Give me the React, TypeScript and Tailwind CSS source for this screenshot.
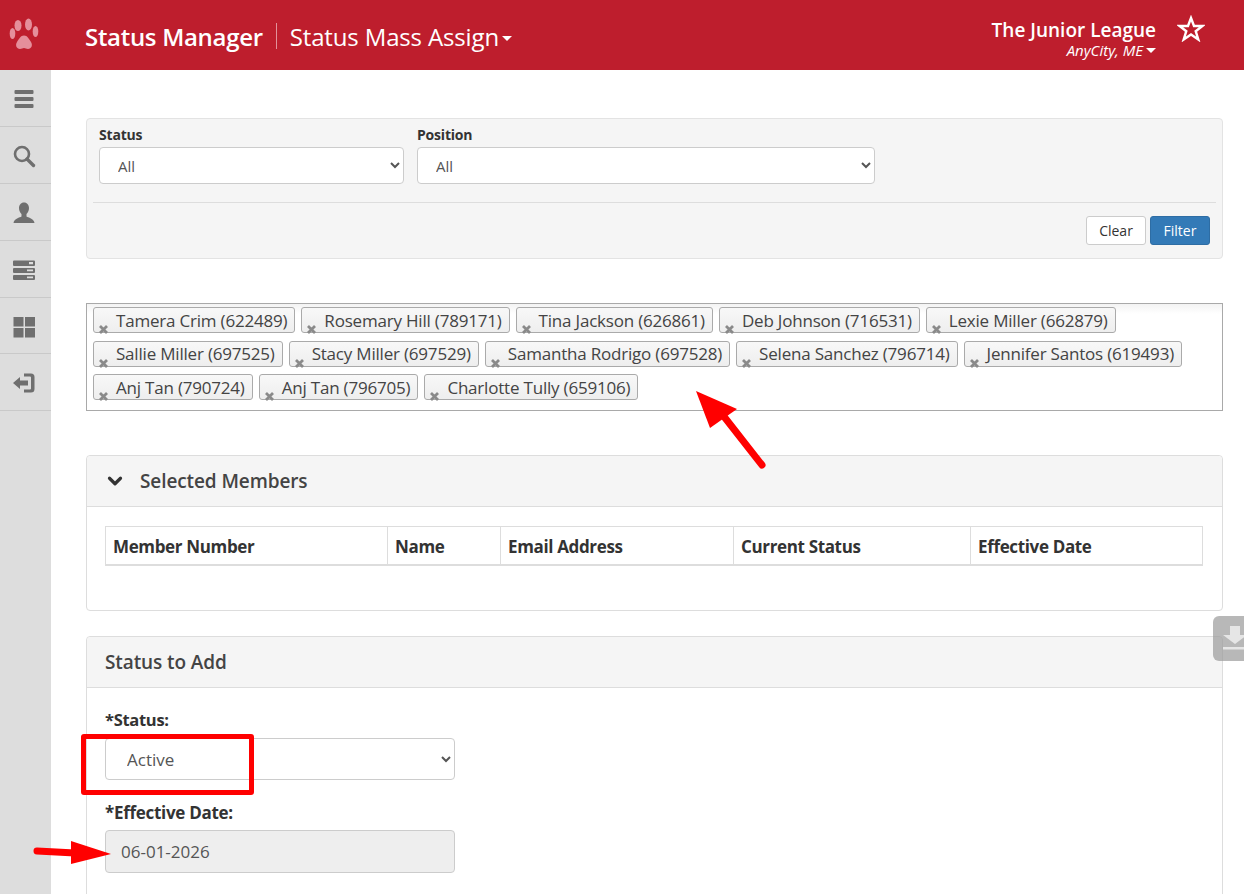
import { ChevronDown } from 'lucide-react';

const FONT = 'font-["Open_Sans","Noto_Sans",sans-serif]';

const tagRows = [
  ['Tamera Crim (622489)', 'Rosemary Hill (789171)', 'Tina Jackson (626861)', 'Deb Johnson (716531)', 'Lexie Miller (662879)'],
  ['Sallie Miller (697525)', 'Stacy Miller (697529)', 'Samantha Rodrigo (697528)', 'Selena Sanchez (796714)', 'Jennifer Santos (619493)'],
  ['Anj Tan (790724)', 'Anj Tan (796705)', 'Charlotte Tully (659106)'],
];

const columns = [
  { label: 'Member Number', width: 'w-[281px]' },
  { label: 'Name', width: 'w-[113px]' },
  { label: 'Email Address', width: 'w-[233px]' },
  { label: 'Current Status', width: 'w-[237px]' },
  { label: 'Effective Date', width: 'flex-1' },
];

const Paw = () => (
  <svg width="30" height="36" viewBox="0 0 30 36" fill="#e58f9b">
    <path d="M15 18.500c-3.500 0-5 3.500-7 6.500-2 3-.5 7 3 7 1.500 0 2.800-1 4-1s2.500 1 4 1c3.500 0 5-4 3-7-2-3-3.500-6.500-7-6.500z" />
    <ellipse cx="9" cy="8.500" rx="3.500" ry="5.500" />
    <ellipse cx="19.500" cy="7.500" rx="3.500" ry="6" />
    <ellipse cx="3.500" cy="16.500" rx="2.800" ry="5.500" />
    <ellipse cx="26.500" cy="14.500" rx="2.800" ry="5.500" />
  </svg>
);

const Caret = () => <span className="inline-block w-0 h-0 border-x-[5px] border-x-transparent border-t-[5px] border-t-white" />;

const SideIcon = ({ children }: { children: React.ReactNode }) => (
  <div className="h-[56.900px] border-b border-[#c9c9c9] flex items-center justify-center pr-[3px] pt-[2px]">
    <svg width="24" height="24" viewBox="0 0 24 24" fill="#6f6f6f">{children}</svg>
  </div>
);

const Sidebar = () => (
  <div className="w-[51px] shrink-0 bg-[#dddddd]">
    <SideIcon>
      <rect x="2.500" y="3" width="19" height="4" rx="1" />
      <rect x="2.500" y="10" width="19" height="4" rx="1" />
      <rect x="2.500" y="17" width="19" height="4" rx="1" />
    </SideIcon>
    <SideIcon>
      <circle cx="10" cy="10" r="7" fill="none" stroke="#6f6f6f" strokeWidth="2.600" />
      <path d="M15 15l6.500 6.500" stroke="#6f6f6f" strokeWidth="3.400" strokeLinecap="round" />
    </SideIcon>
    <SideIcon>
      <path d="M12 1.500c3.200 0 5 2.500 5 5.500 0 2.600-1.200 5-2.500 6v2.500c1.500 1 7.500 2 8 6.500H1.500c.5-4.500 6.500-5.500 8-6.500V13C8.200 12 7 9.600 7 7c0-3 1.800-5.500 5-5.500z" />
    </SideIcon>
    <SideIcon>
      <path fillRule="evenodd" d="M2 2.500h20a1 1 0 0 1 1 1V7a1 1 0 0 1-1 1H2a1 1 0 0 1-1-1V3.500a1 1 0 0 1 1-1zM17 4v2.200h4V4zM2 10h20a1 1 0 0 1 1 1v3a1 1 0 0 1-1 1H2a1 1 0 0 1-1-1v-3a1 1 0 0 1 1-1zm13 1.500v1.800h6v-1.800zM2 17h20a1 1 0 0 1 1 1v3a1 1 0 0 1-1 1H2a1 1 0 0 1-1-1v-3a1 1 0 0 1 1-1zm13 1.500v1.800h6v-1.800z" />
    </SideIcon>
    <SideIcon>
      <rect x="1.500" y="2" width="10" height="9.500" />
      <rect x="13" y="2" width="10" height="9.500" />
      <rect x="1.500" y="13" width="10" height="9.500" />
      <rect x="13" y="13" width="10" height="9.500" />
    </SideIcon>
    <SideIcon>
      <path d="M1 12l7-6v3.500h8v5H8V18z" />
      <path d="M12 2.500h7a3.500 3.500 0 0 1 3.500 3.500v12a3.500 3.500 0 0 1-3.500 3.500h-7v-3h6a1 1 0 0 0 1-1V6.500a1 1 0 0 0-1-1h-6z" />
    </SideIcon>
  </div>
);

const Tag = ({ label }: { label: string }) => (
  <span className="relative h-[26px] pl-[22px] pr-[7px] pt-[1px] flex items-center rounded-[3px] border border-[#aaaaaa] bg-gradient-to-b from-[#f8f8f8] to-[#eeeeee] text-[17px] tracking-[-0.2px] text-[#444444] whitespace-nowrap">
    <svg className="absolute left-[4px] bottom-[-3px]" width="11" height="11" viewBox="0 0 11 11" stroke="#8a8a8a" strokeWidth="2.800">
      <path d="M2 2l7 7M9 2l-7 7" />
    </svg>
    {label}
  </span>
);

const Panel = ({ title, chevron, children }: { title: string; chevron?: boolean; children: React.ReactNode }) => (
  <div className="border border-[#dddddd] rounded-[4px] bg-white">
    <div className="h-[51px] bg-[#f5f5f5] border-b border-[#dddddd] rounded-t-[4px] flex items-center px-[18px]">
      {chevron && <ChevronDown size={22} strokeWidth={3.500} className="text-[#333333] mr-[13px] -ml-[1px]" />}
      <span className={`text-[19px] font-semibold tracking-[-0.1px] text-[#444444] ${chevron ? 'ml-[1px]' : ''}`}>{title}</span>
    </div>
    {children}
  </div>
);

export default function App() {
  return (
    <div className={`${FONT} relative h-[894px] overflow-hidden bg-white flex flex-col`}>
      <header className="h-[70px] shrink-0 bg-[#be1e2d] flex items-center text-white">
        <div className="w-[51px] flex justify-center pr-[3px]"><Paw /></div>
        <div className="ml-[34px] mt-[3px] text-[24px] font-semibold tracking-[-0.3px]">Status Manager</div>
        <div className="w-px h-[26px] bg-[#e2929a] mx-[13px] mt-[2px]" />
        <div className="text-[24px] mt-[3px] tracking-[-0.15px]">Status Mass Assign</div>
        <span className="ml-[3px] mt-[6px] flex"><Caret /></span>
        <div className="ml-auto flex flex-col items-end mr-[88px] mt-[8px]">
          <div className="text-[19px] font-semibold leading-[22px]">The Junior League</div>
          <div className="flex items-center gap-[3px] text-[15px] italic leading-[19px]">AnyCity, ME <Caret /></div>
        </div>
        <svg className="absolute left-[1177px] top-[15px]" width="28" height="27" viewBox="0 0 28 27" fill="none" stroke="#ffffff" strokeWidth="2.400" strokeLinejoin="miter">
          <path d="M14 3l3 8h8.500l-6.800 5.200 2.600 8.300L14 19.500l-7.300 5 2.600-8.300L2.500 11H11z" />
        </svg>
      </header>

      <div className="flex flex-1 min-h-0">
        <Sidebar />
        <main className="flex-1 pl-[35px] pr-[21px] pt-[48px]">
          <div className="h-[141px] border border-[#e3e3e3] rounded-[4px] bg-[#f5f5f5] px-[6px] pt-[6px]">
            <div className="flex gap-[13px] px-[6px]">
              <div>
                <label className="block text-[14px] font-bold text-[#333333] leading-[19px] tracking-[-0.2px]">Status</label>
                <select className="block mt-[3px] w-[305px] h-[37px] rounded-[4px] border border-[#cccccc] bg-white pl-[14px] text-[15px] text-[#555555]">
                  <option>All</option>
                </select>
              </div>
              <div>
                <label className="block text-[14px] font-bold text-[#333333] leading-[19px] tracking-[-0.2px]">Position</label>
                <select className="block mt-[3px] w-[458px] h-[37px] rounded-[4px] border border-[#cccccc] bg-white pl-[14px] text-[15px] text-[#555555]">
                  <option>All</option>
                </select>
              </div>
            </div>
            <div className="mt-[18px] border-t border-[#dddddd]" />
            <div className="mt-[13px] flex justify-end gap-[4px] pr-[6px]">
              <button className="w-[60px] h-[29px] rounded-[3px] border border-[#cccccc] bg-white text-[14px] text-[#333333]">Clear</button>
              <button className="w-[60px] h-[29px] rounded-[3px] border border-[#2e6da4] bg-[#337ab7] text-[14px] text-white">Filter</button>
            </div>
          </div>

          <div className="mt-[44px] h-[108px] border border-[#a9a9a9] pl-[6px] pt-[3px] flex flex-col gap-[7.500px] bg-gradient-to-b from-[#f3f3f3] via-white to-white bg-[length:100%_20px] bg-no-repeat">
            {tagRows.map((row, i) => (
              <div key={i} className="flex gap-[6px]">
                {row.map((t) => <Tag key={t} label={t} />)}
              </div>
            ))}
          </div>

          <div className="mt-[44px]">
            <Panel title="Selected Members" chevron>
              <div className="pl-[18px] pr-[19px] pt-[19px] h-[103px]">
                <div className="h-[40px] flex border border-[#dddddd] border-b-2">
                  {columns.map((c, i) => (
                    <div key={c.label} className={`${c.width} ${i > 0 ? 'border-l border-[#dddddd]' : ''} px-[7px] pt-[3px] flex items-center text-[17px] font-bold tracking-[-0.35px] text-[#333333]`}>
                      {c.label}
                    </div>
                  ))}
                </div>
              </div>
            </Panel>
          </div>

          <div className="mt-[25px]">
            <Panel title="Status to Add">
              <div className="px-[18px] pt-[22px] pb-[40px]">
                <label className="block text-[16.500px] font-bold text-[#333333] leading-[20px] tracking-[-0.3px]">*Status:</label>
                <select className="block mt-[8px] w-[350px] h-[42px] rounded-[4px] border border-[#cccccc] bg-white pl-[17px] text-[17px] text-[#555555]">
                  <option>Active</option>
                </select>
                <label className="block mt-[23px] text-[17px] font-bold text-[#333333] leading-[20px] tracking-[-0.3px]">*Effective Date:</label>
                <input readOnly value="06-01-2026" className="block mt-[7px] w-[350px] h-[43px] rounded-[4px] border border-[#cccccc] bg-[#eeeeee] px-[15px] text-[17px] text-[#555555]" />
              </div>
            </Panel>
          </div>
        </main>
      </div>

      {/* floating download tab */}
      <div className="absolute left-[1213px] top-[616px] w-[40px] h-[45px] rounded-[6px] bg-[#9a9a9a]/70 flex items-start justify-start pl-[10px] pt-[10px]">
        <svg width="24" height="26" viewBox="0 0 24 26" fill="#e6e6e6">
          <path d="M7 0h10v9h7L12 18 0 9h7z" />
          <rect x="0" y="21" width="24" height="2.500" />
        </svg>
      </div>

      {/* screenshot annotations */}
      <div className="absolute left-[81px] top-[734px] w-[173px] h-[61px] border-[5px] border-[#ff0000] rounded-[3px]" />
      <svg className="absolute left-0 top-0 pointer-events-none" width="1244" height="894">
        <path d="M762 465L722 414" stroke="#ff0000" strokeWidth="7" strokeLinecap="round" />
        <path d="M696 391L710 428L737 409z" fill="#ff0000" />
        <path d="M37 851L75 853" stroke="#ff0000" strokeWidth="7" strokeLinecap="round" />
        <path d="M111 854L71 841V864z" fill="#ff0000" />
      </svg>
    </div>
  );
}
